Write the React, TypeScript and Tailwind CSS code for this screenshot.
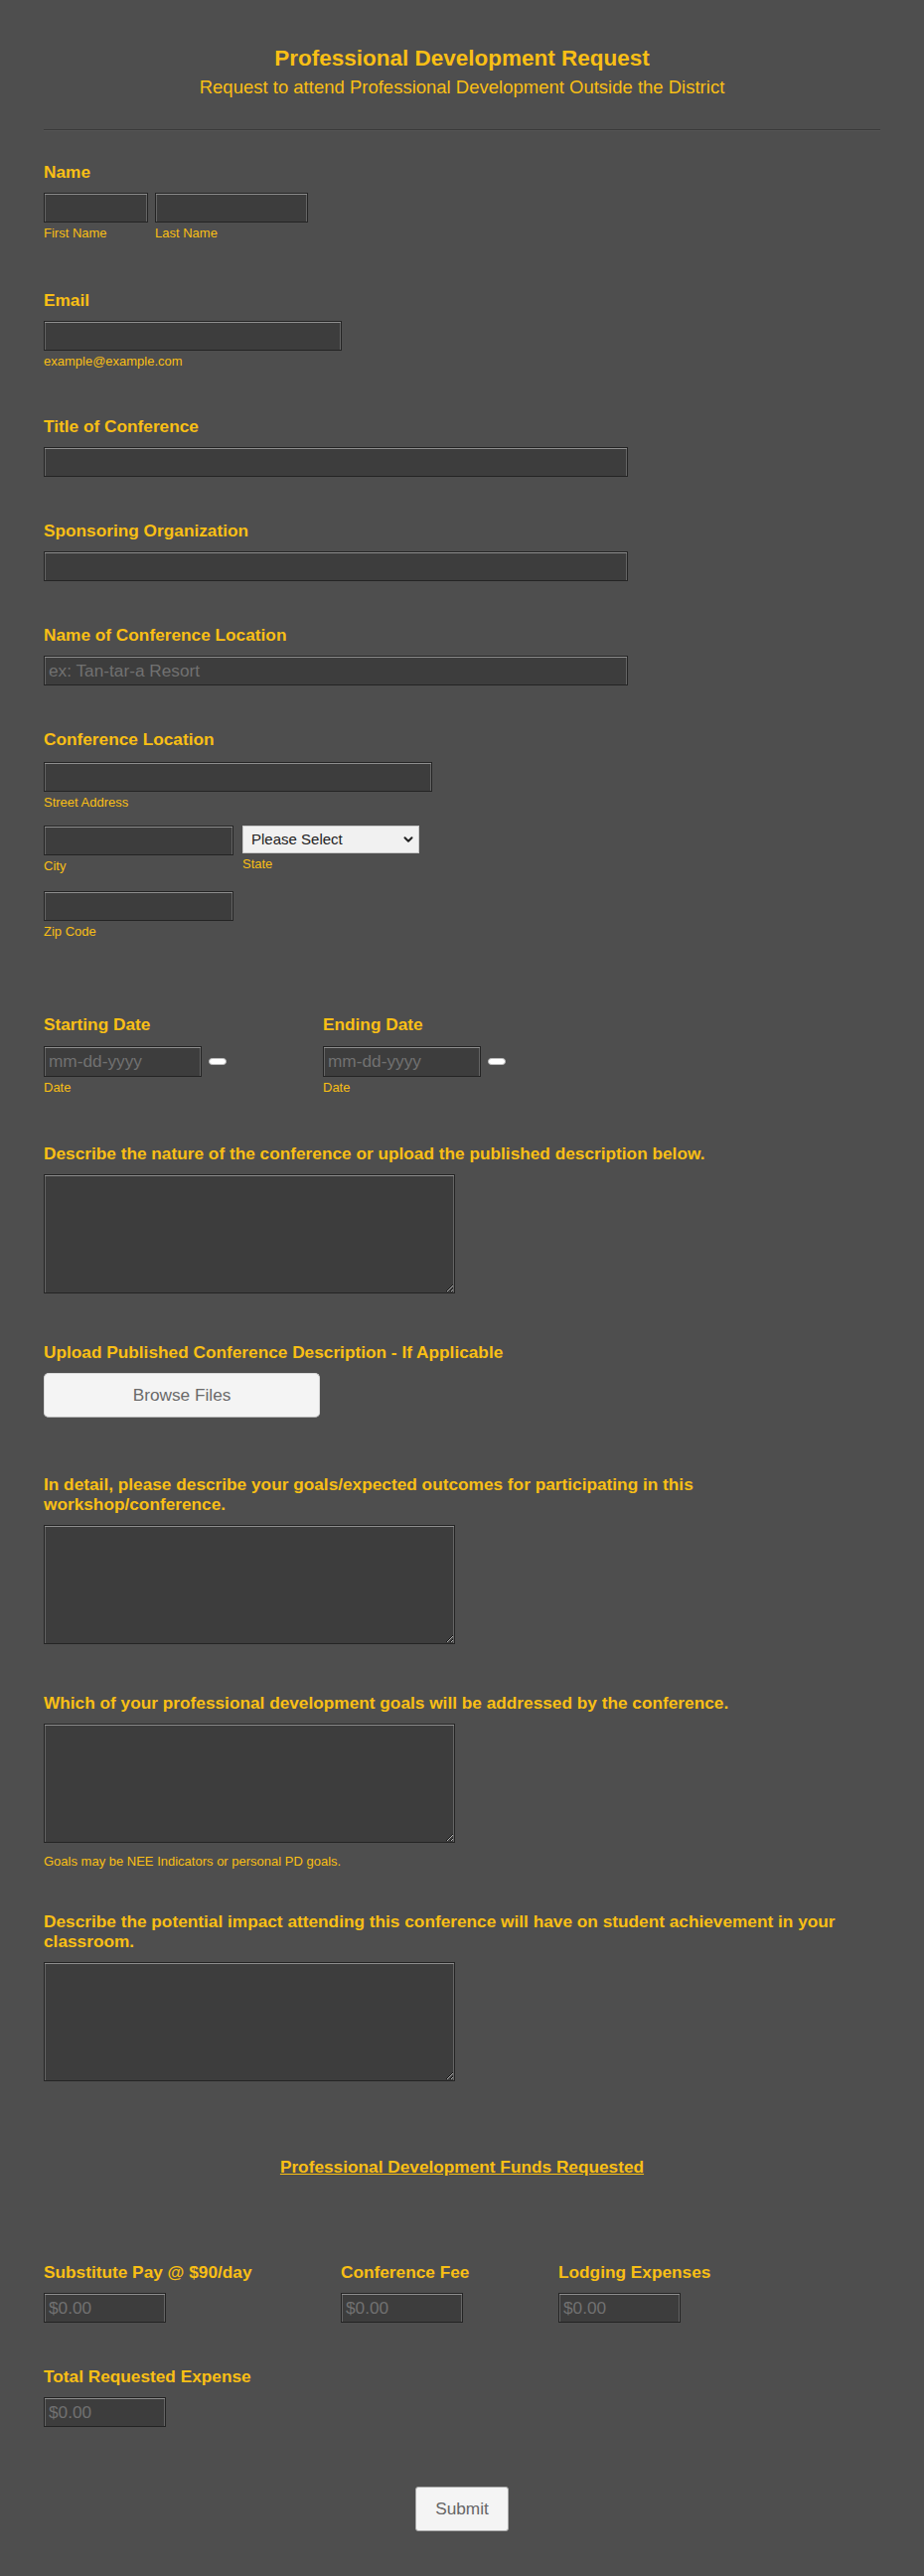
import React from 'react';
import { ChevronDown } from 'lucide-react';

const inputCls =
  'block h-[30px] border border-[#242424] bg-[#3d3d3d] px-[4px] text-[17.25px] text-[#ddd] shadow-[inset_0_1px_0_#8e8e8e,inset_1px_0_0_#656565,inset_-1px_0_0_#656565] outline-none placeholder:text-[#717171]';

const areaCls =
  'block h-[120px] w-[414px] border border-[#242424] bg-[#3d3d3d] p-[4px] text-[17.25px] text-[#ddd] shadow-[inset_0_1px_0_#8e8e8e,inset_1px_0_0_#656565,inset_-1px_0_0_#656565] outline-none';

function Label({ children }: { children: React.ReactNode }) {
  return <label className="block max-w-[820px] text-[17.25px] font-bold leading-[20px]">{children}</label>;
}

function Sub({ children }: { children: React.ReactNode }) {
  return <span className="mt-[3px] mb-[5px] block text-[13px] leading-[16px]">{children}</span>;
}

function DateField({ label }: { label: string }) {
  return (
    <div className="w-[281px]">
      <Label>{label}</Label>
      <div className="mt-[12px] flex items-center gap-[7px]">
        <input className={`${inputCls} h-[31px] w-[159px]`} placeholder="mm-dd-yyyy" />
        <div className="h-[7px] w-[18px] rounded-full border border-[#bbb] bg-white" />
      </div>
      <Sub>Date</Sub>
    </div>
  );
}

function Money({ label, width }: { label: string; width: string }) {
  return (
    <div className={width}>
      <Label>{label}</Label>
      <input className={`${inputCls} mt-[11px] w-[123px]`} placeholder="$0.00" />
    </div>
  );
}

export default function App() {
  return (
    <div className="min-h-screen bg-[#4e4e4e] font-['Liberation_Sans',Arial,sans-serif] text-[#f9bf15]">
      <div className="mx-auto w-[842px] pt-[45px] pb-[44px]">
        {/* header */}
        <div className="text-center">
          <h1 className="text-[22.5px] font-bold leading-[27px]">Professional Development Request</h1>
          <p className="mt-[5px] text-[18.5px] leading-[22px]">
            Request to attend Professional Development Outside the District
          </p>
        </div>
        <div className="mt-[31px] h-[2px] border-b border-[#545454] bg-[#3a3a3a]" />

        {/* Name */}
        <div className="mt-[31px]">
          <Label>Name</Label>
          <div className="mt-[11px] flex gap-[7px]">
            <div>
              <input className={`${inputCls} w-[105px]`} />
              <Sub>First Name</Sub>
            </div>
            <div>
              <input className={`${inputCls} w-[154px]`} />
              <Sub>Last Name</Sub>
            </div>
          </div>
        </div>

        <div className="mt-[44px]">
          <Label>Email</Label>
          <input className={`${inputCls} mt-[11px] w-[300px]`} />
          <Sub>example@example.com</Sub>
        </div>

        <div className="mt-[47px]">
          <Label>Title of Conference</Label>
          <input className={`${inputCls} mt-[11px] w-[588px]`} />
        </div>

        <div className="mt-[44px]">
          <Label>Sponsoring Organization</Label>
          <input className={`${inputCls} mt-[11px] w-[588px]`} />
        </div>

        <div className="mt-[44px]">
          <Label>Name of Conference Location</Label>
          <input className={`${inputCls} mt-[11px] w-[588px]`} placeholder="ex: Tan-tar-a Resort" />
        </div>

        {/* address */}
        <div className="mt-[44px]">
          <Label>Conference Location</Label>
          <input className={`${inputCls} mt-[13px] w-[391px]`} />
          <Sub>Street Address</Sub>
          <div className="mt-[15px] flex gap-[9px]">
            <div>
              <input className={`${inputCls} w-[191px]`} />
              <Sub>City</Sub>
            </div>
            <div>
              <div className="relative h-[28px] w-[178px]">
                <select className="h-full w-full appearance-none border border-[#c9c9c9] bg-[#f1f1f1] pl-[8px] text-[15px] text-[#222] outline-none">
                  <option>Please Select</option>
                </select>
                <ChevronDown className="pointer-events-none absolute top-[7px] right-[4px] text-[#222]" size={14} strokeWidth={3.5} />
              </div>
              <Sub>State</Sub>
            </div>
          </div>
          <div className="mt-[12px]">
            <input className={`${inputCls} w-[191px]`} />
            <Sub>Zip Code</Sub>
          </div>
        </div>

        {/* dates */}
        <div className="mt-[75px] flex">
          <DateField label="Starting Date" />
          <DateField label="Ending Date" />
        </div>

        <div className="mt-[43px]">
          <Label>Describe the nature of the conference or upload the published description below.</Label>
          <textarea className={`${areaCls} mt-[11px]`} />
        </div>

        <div className="mt-[49px]">
          <Label>Upload Published Conference Description - If Applicable</Label>
          <button className="mt-[11px] h-[45px] w-[278px] rounded-[5px] border border-[#d8d8d8] border-b-[#acacac] bg-[#f4f4f4] text-[17.25px] text-[#6a6a6a]">
            Browse Files
          </button>
        </div>

        <div className="mt-[57px]">
          <Label>
            In detail, please describe your goals/expected outcomes for participating in this workshop/conference.
          </Label>
          <textarea className={`${areaCls} mt-[11px]`} />
        </div>

        <div className="mt-[49px]">
          <Label>Which of your professional development goals will be addressed by the conference.</Label>
          <textarea className={`${areaCls} mt-[11px]`} />
          <span className="mt-[11px] mb-[5px] block text-[13px] leading-[16px]">
            Goals may be NEE Indicators or personal PD goals.
          </span>
        </div>

        <div className="mt-[42px]">
          <Label>
            Describe the potential impact attending this conference will have on student achievement in your classroom.
          </Label>
          <textarea className={`${areaCls} mt-[11px]`} />
        </div>

        <h2 className="mt-[76px] text-center text-[17.25px] font-bold leading-[20px] underline">
          Professional Development Funds Requested
        </h2>

        {/* funds */}
        <div className="mt-[86px] flex">
          <Money label="Substitute Pay @ $90/day" width="w-[299px]" />
          <Money label="Conference Fee" width="w-[219px]" />
          <Money label="Lodging Expenses" width="w-[200px]" />
        </div>

        <div className="mt-[44px]">
          <Money label="Total Requested Expense" width="w-[300px]" />
        </div>

        <div className="mt-[60px] flex justify-center">
          <button className="h-[45px] w-[94px] rounded-[3px] border border-[#a9a9a9] bg-[#f4f4f4] text-[17.25px] text-[#666]">
            Submit
          </button>
        </div>
      </div>
    </div>
  );
}
